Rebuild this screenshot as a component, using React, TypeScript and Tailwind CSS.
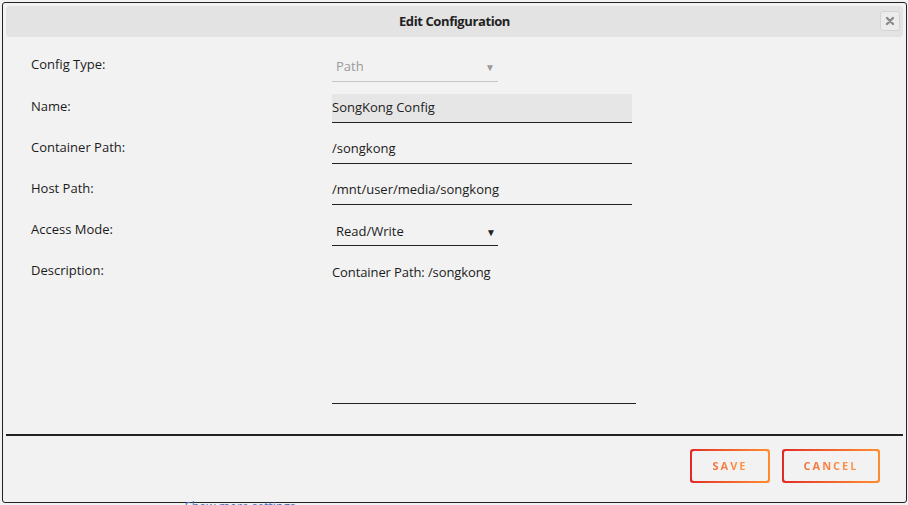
export default function App() {
  return (
    <div className="h-[505px] w-[908px] overflow-hidden bg-[#f2f2f2] font-['Open_Sans',sans-serif] text-[13px] text-[#1c1b1b]">
      <div className="ml-[2px] mt-[2px] h-[501px] w-[905px] rounded-[3px] border border-[#222] bg-[#f2f2f2] px-[3px] pt-[3px]">
        {/* title bar */}
        <div className="relative flex h-[31px] items-center justify-center rounded-[4px] bg-[#e3e3e3]">
          <span className="text-[13px] font-bold tracking-[-0.4px] text-[#222]">Edit Configuration</span>
          <button className="absolute right-[3px] top-[5px] flex h-[20px] w-[20px] items-center justify-center rounded-[3px] border border-[#d4d4d4] bg-[#ececec]">
            <svg width="10" height="10" viewBox="0 0 10 10">
              <path d="M2 2L8 8M8 2L2 8" stroke="#8a8a8a" strokeWidth="2.4" strokeLinecap="round" />
            </svg>
          </button>
        </div>

        {/* form */}
        <div className="grid grid-cols-[301px_1fr] pl-[25px] pt-[16px]">
          <div className="h-[41px] pt-[2px]">Config Type:</div>
          <div>
            <div className="flex h-[29px] w-[166px] items-center justify-between border-b border-[#c6c6c6] pl-[4px] pr-[3px] text-[#9a9a9a]">
              <span>Path</span>
              <span className="text-[10px] text-[#9a9a9a]">▼</span>
            </div>
          </div>

          <div className="h-[41px] pt-[3px]">Name:</div>
          <div>
            <div className="flex h-[29px] w-[300px] items-center border-b border-[#222] bg-[#e6e6e6] text-[#222]">
              SongKong Config
            </div>
          </div>

          <div className="h-[41px] pt-[3px]">Container Path:</div>
          <div>
            <div className="flex h-[29px] w-[300px] items-center border-b border-[#222]">/songkong</div>
          </div>

          <div className="h-[41px] pt-[3px]">Host Path:</div>
          <div>
            <div className="flex h-[29px] w-[300px] items-center border-b border-[#222]">/mnt/user/media/songkong</div>
          </div>

          <div className="h-[41px] pt-[3px]">Access Mode:</div>
          <div>
            <div className="flex h-[29px] w-[166px] items-center justify-between border-b border-[#222] pl-[4px] pr-[2px] pt-[2px]">
              <span>Read/Write</span>
              <span className="text-[10px] text-[#222]">▼</span>
            </div>
          </div>

          <div className="pt-[3px]">Description:</div>
          <div>
            <div className="h-[146px] w-[304px] border-b border-[#222] pt-[5px] tracking-[-0.1px]">Container Path: /songkong</div>
          </div>
        </div>

        {/* divider */}
        <div className="mt-[30px] h-[2px] bg-[#222]" />

        {/* footer */}
        <div className="flex justify-end gap-[12px] pr-[23px] pt-[13px]">
          <button className="rounded-[3px] bg-gradient-to-r from-[#e22828] to-[#ff8c2f] p-[2px]">
            <span className="flex h-[30px] w-[76px] items-center justify-center rounded-[2px] bg-[#f2f2f2]">
              <span className="bg-gradient-to-r from-[#f26d3a] to-[#ff9a4a] bg-clip-text text-[11px] font-bold tracking-[2px] text-transparent">SAVE</span>
            </span>
          </button>
          <button className="rounded-[3px] bg-gradient-to-r from-[#e22828] to-[#ff8c2f] p-[2px]">
            <span className="flex h-[30px] w-[94px] items-center justify-center rounded-[2px] bg-[#f2f2f2]">
              <span className="bg-gradient-to-r from-[#f26d3a] to-[#ff9a4a] bg-clip-text text-[11px] font-bold tracking-[2px] text-transparent">CANCEL</span>
            </span>
          </button>
        </div>
      </div>
      <div className="-mt-[3px] pl-[172px] text-[12px] leading-[14px] text-[#486dba]">⌄ Show more settings ...</div>
    </div>
  )
}
